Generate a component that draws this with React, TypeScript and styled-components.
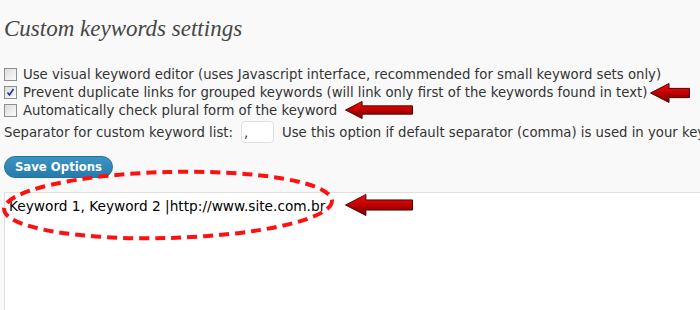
import React from 'react'
import styled, { createGlobalStyle } from 'styled-components'

const GlobalStyle = createGlobalStyle`
  html, body {
    margin: 0;
    padding: 0;
    background: #f9f9f9;
    overflow: hidden;
  }
`

function Arrow({ width, height }: { width: number; height: number }) {
  const head = height * 0.95
  const shaftTop = height * 0.27
  const shaftBot = height * 0.73
  return (
    <svg width={width} height={height} viewBox={`0 0 ${width} ${height}`}>
      <defs>
        <linearGradient id={`ag${width}`} x1="0" y1="0" x2="0" y2="1">
          <stop offset="0" stopColor="#f01010" />
          <stop offset="0.5" stopColor="#c00000" />
          <stop offset="1" stopColor="#6a0000" />
        </linearGradient>
      </defs>
      <path
        d={`M0.5 ${height / 2} L${head} 0.5 L${head} ${shaftTop} L${width - 0.5} ${shaftTop} L${width - 0.5} ${shaftBot} L${head} ${shaftBot} L${head} ${height - 0.5} Z`}
        fill={`url(#ag${width})`}
        stroke="#5a0000"
        strokeWidth="1"
      />
    </svg>
  )
}

function Checkbox({ checked }: { checked?: boolean }) {
  return (
    <Box>
      {checked && (
        <svg width="9" height="9" viewBox="0 0 9 9">
          <path d="M1.5 4.5 L3.5 7 L7.5 1" stroke="#21319c" strokeWidth="1.6" fill="none" />
        </svg>
      )}
    </Box>
  )
}

export default function App() {
  return (
    <Page>
      <GlobalStyle />
      <Title>Custom keywords settings</Title>
      <Options>
        <Row>
          <Checkbox />
          <span>Use visual keyword editor (uses Javascript interface, recommended for small keyword sets only)</span>
        </Row>
        <Row>
          <Checkbox checked />
          <span>Prevent duplicate links for grouped keywords (will link only first of the keywords found in text)</span>
        </Row>
        <Row>
          <Checkbox />
          <span>Automatically check plural form of the keyword</span>
        </Row>
        <SeparatorRow>
          <span>Separator for custom keyword list:</span>
          <SmallInput>,</SmallInput>
          <span>Use this option if default separator (comma) is used in your keywords</span>
        </SeparatorRow>
      </Options>
      <SaveButton>Save Options</SaveButton>
      <KeywordArea>Keyword 1, Keyword 2 |http://www.site.com.br</KeywordArea>

      <Overlay style={{ left: 650, top: 83 }}>
        <Arrow width={40} height={20} />
      </Overlay>
      <Overlay style={{ left: 345, top: 101 }}>
        <Arrow width={68} height={18} />
      </Overlay>
      <Overlay style={{ left: 345, top: 194 }}>
        <Arrow width={68} height={22} />
      </Overlay>
      <Overlay style={{ left: 0, top: 168 }}>
        <svg width="340" height="76" viewBox="0 0 340 76">
          <ellipse
            cx="168"
            cy="37"
            rx="164"
            ry="33"
            transform="rotate(-1.5 168 37)"
            fill="none"
            stroke="#ff1010"
            strokeWidth="4"
            strokeDasharray="10 6"
          />
        </svg>
      </Overlay>
    </Page>
  )
}

const Page = styled.div`
  position: relative;
  width: 700px;
  height: 310px;
  overflow: hidden;
  background: #f9f9f9;
  font-family: 'DejaVu Sans', Verdana, sans-serif;
  font-size: 13.25px;
  color: #333;
`

const Title = styled.h2`
  margin: 0;
  padding: 14px 0 0 4px;
  height: 36px;
  font-family: 'Liberation Serif', Georgia, serif;
  font-style: italic;
  font-weight: normal;
  font-size: 23px;
  line-height: 30px;
  color: #464646;
`

const Options = styled.div`
  display: flex;
  flex-direction: column;
  padding: 15px 0 0 4px;
`

const Row = styled.div`
  display: flex;
  align-items: center;
  gap: 6px;
  height: 18px;
  white-space: nowrap;
`

const Box = styled.span`
  flex: none;
  width: 11px;
  height: 11px;
  border: 1px solid #8e8f8f;
  background: linear-gradient(135deg, #dcdcdc, #fbfbfb);
  display: flex;
  align-items: center;
  justify-content: center;
`

const SeparatorRow = styled.div`
  display: flex;
  align-items: center;
  height: 22px;
  margin-top: 2px;
  white-space: nowrap;
`

const SmallInput = styled.span`
  flex: none;
  width: 29px;
  height: 20px;
  margin: 0 8px 0 8px;
  border: 1px solid #dfdfdf;
  border-radius: 4px;
  background: #fff;
  box-sizing: content-box;
  padding-left: 2px;
  line-height: 22px;
  color: #333;
`

const SaveButton = styled.button`
  display: block;
  margin: 13px 0 0 4px;
  width: 109px;
  height: 22px;
  border: 1px solid #21759b;
  border-radius: 11px;
  background: linear-gradient(#3d93c2, #257bab);
  color: #fff;
  font-family: 'DejaVu Sans', Verdana, sans-serif;
  font-weight: bold;
  font-size: 11.7px;
  padding: 0;
`

const KeywordArea = styled.div`
  margin: 14px 0 0 4px;
  height: 140px;
  border: 1px solid #dfdfdf;
  border-right: none;
  background: #fff;
  padding: 5px 0 0 4px;
  font-size: 13.7px;
  color: #000;
  white-space: nowrap;
`

const Overlay = styled.div`
  position: absolute;
  line-height: 0;
  pointer-events: none;
`
